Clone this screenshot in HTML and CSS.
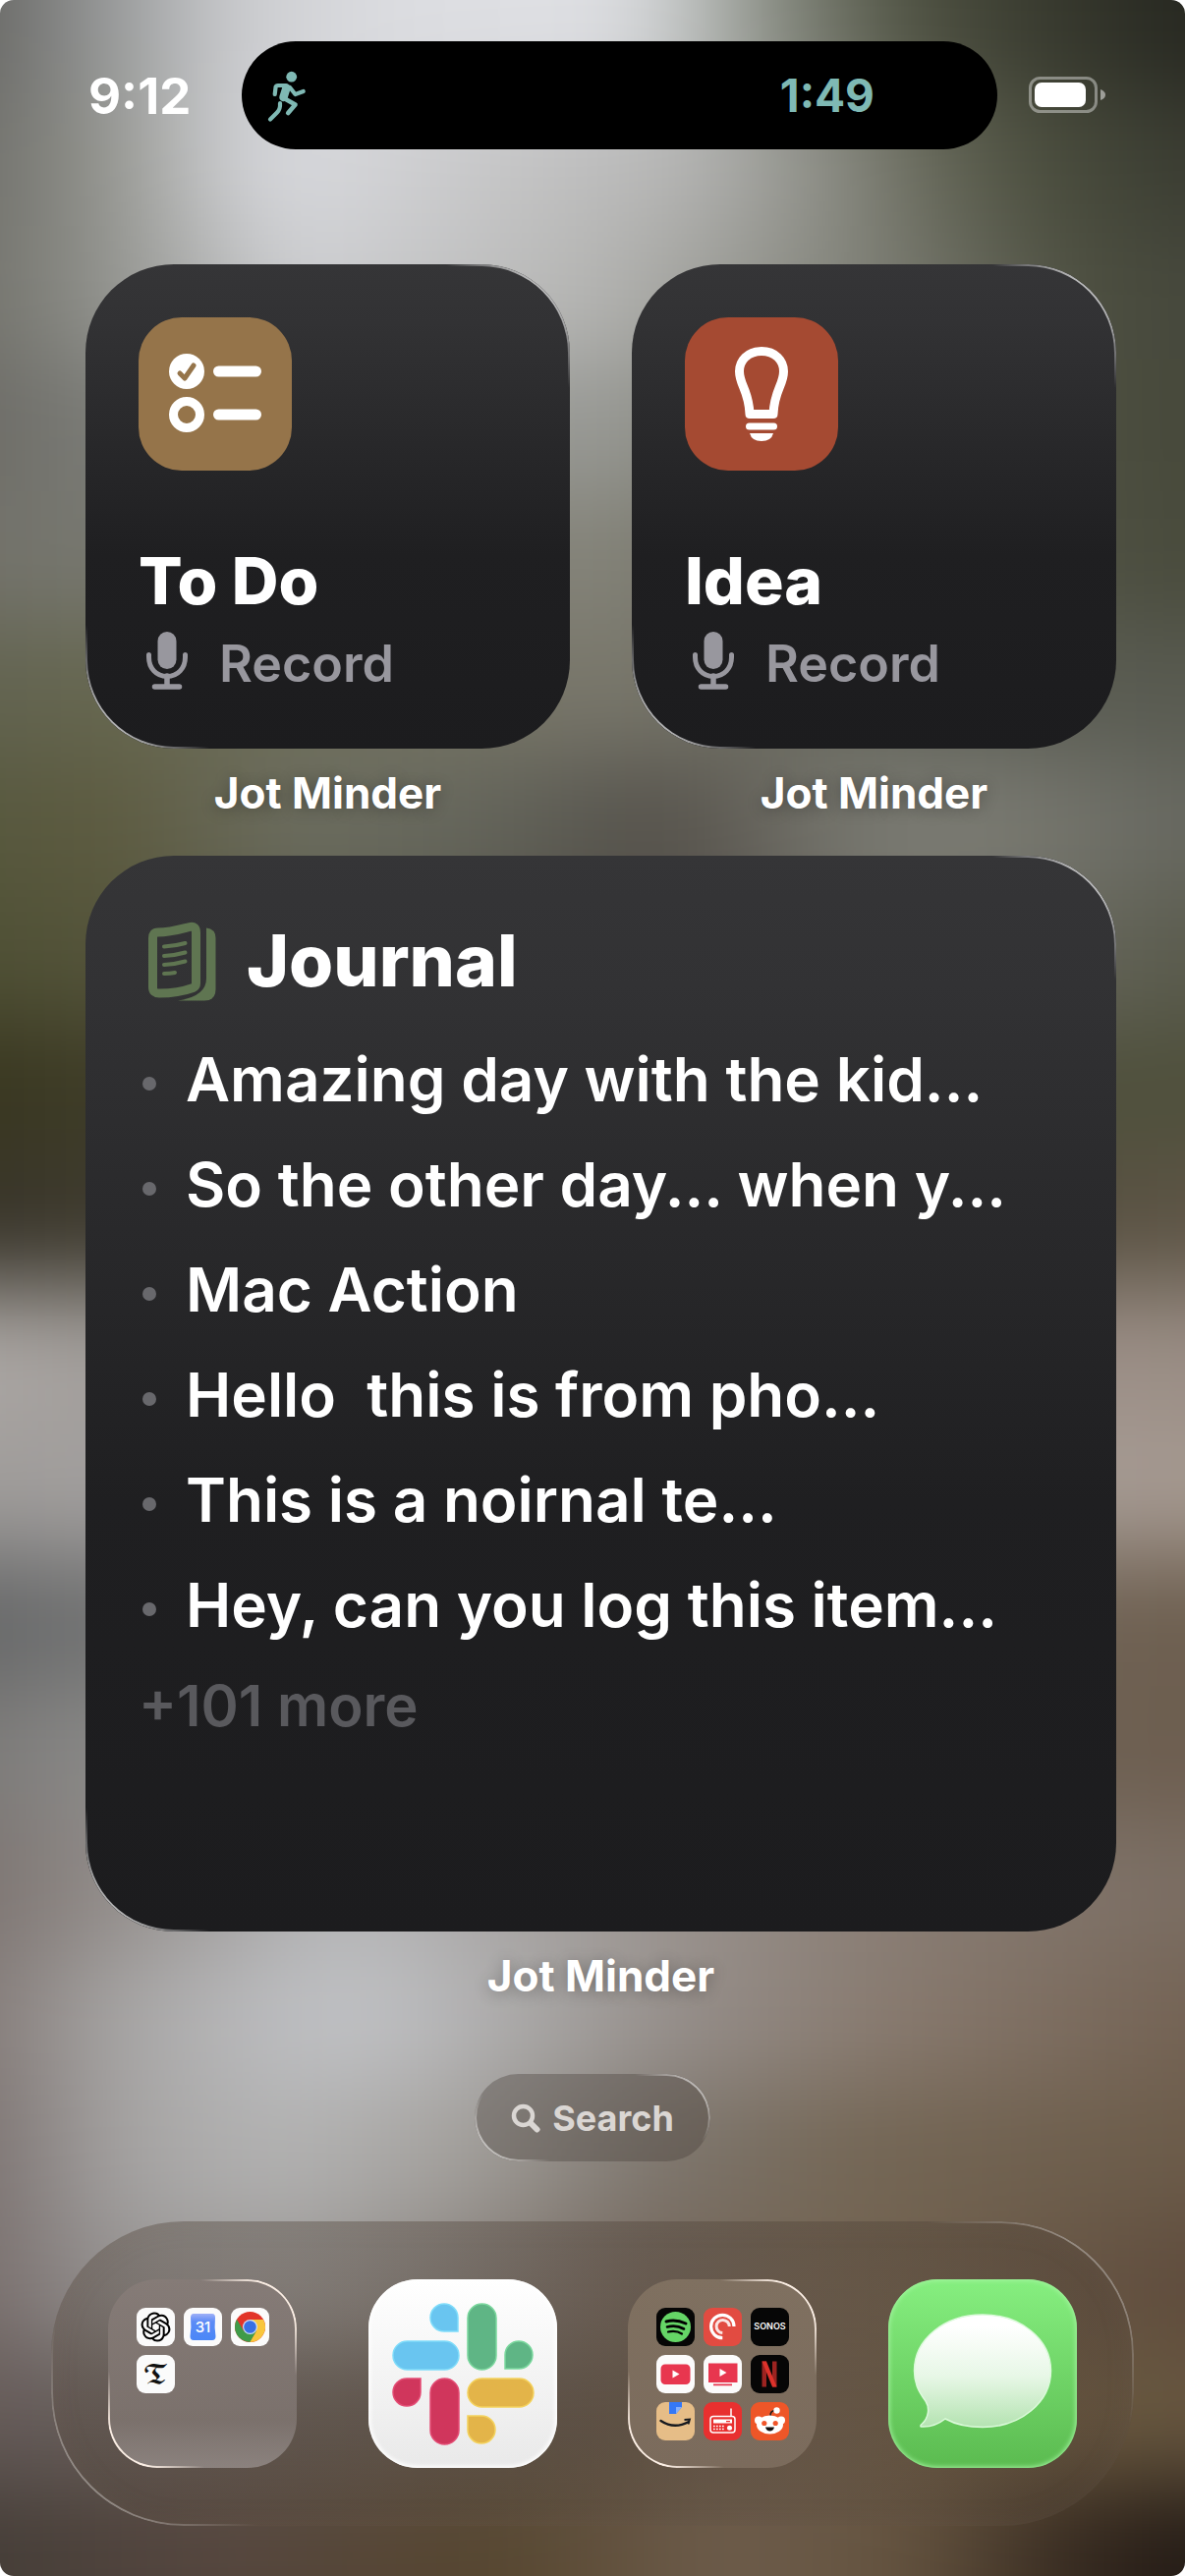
FILE: index.html
```html
<!DOCTYPE html>
<html lang="en">
<head>
    <meta charset="utf-8">
    <meta name="viewport" content="width=device-width, initial-scale=1">
    <title>Home Screen</title>
    <link rel="stylesheet" href="styles.css">
</head>
<body>

<div class="screen">

    <!-- blurred wallpaper, one strip of colour per row -->
    <div class="wallpaper" aria-hidden="true">
        <div class="strip s1"></div>
        <div class="strip s2"></div>
        <div class="strip s3"></div>
        <div class="strip s4"></div>
        <div class="strip s5"></div>
        <div class="strip s6"></div>
        <div class="strip s7"></div>
        <div class="strip s8"></div>
        <div class="strip s9"></div>
        <div class="strip s10"></div>
        <div class="strip s11"></div>
        <div class="strip s12"></div>
        <div class="strip s13"></div>
        <div class="strip s14"></div>
        <div class="strip s15"></div>
        <div class="strip s16"></div>
        <div class="strip s17"></div>
        <div class="strip s18"></div>
        <div class="strip s19"></div>
        <div class="strip s20"></div>
    </div>

    <header class="status">
        <time class="clock">9:12</time>
        <div class="island">
            <svg class="runner" viewBox="0 0 70 70" fill="none" stroke="#7fb9b4" stroke-linecap="round" stroke-linejoin="round">
                <circle cx="36.7" cy="16.2" r="5.4" fill="#7fb9b4" stroke="none"/>
                <path d="M19.7 34 L20.6 26.4 Q21 25 23 25 L31 25" stroke-width="4.2"/>
                <path d="M31.5 27.5 L28.5 37" stroke-width="8.5"/>
                <path d="M35 27 L40.5 34 L48.7 31" stroke-width="4.2"/>
                <path d="M29 38 L40.5 44.5 L33.2 53" stroke-width="4.6"/>
                <path d="M25 43 Q25.5 49 22 52.5 L15 59.5" stroke-width="4.2"/>
            </svg>
            <span class="timer">1:49</span>
        </div>
        <svg class="battery" viewBox="0 0 78 38">
            <rect x="1.5" y="1.5" width="67" height="34" rx="10" fill="none" stroke="#fff" stroke-opacity=".4" stroke-width="3"/>
            <rect x="6" y="6" width="52" height="25" rx="7" fill="#fff"/>
            <path d="M73 13 Q78 15 78 18.500 Q78 22 73 24Z" fill="#fff" fill-opacity=".5"/>
        </svg>
    </header>

    <main class="widgets">
        <section class="widget small">
            <div class="card rim">
                <svg class="tile tile-todo" viewBox="0 0 156 156">
                    <circle cx="49" cy="55" r="18" fill="#fff"/>
                    <path d="M42 57 L47 62 L56 49" fill="none" stroke="#95744a" stroke-width="5" stroke-linecap="round" stroke-linejoin="round"/>
                    <circle cx="49" cy="99" r="13.500" fill="none" stroke="#fff" stroke-width="9"/>
                    <path d="M81.500 55 H119.500 M81.500 99 H119.500" stroke="#fff" stroke-width="11" stroke-linecap="round"/>
                </svg>
                <h2>To Do</h2>
                <button class="record" type="button">
                    <svg class="mic" viewBox="-8 0 58 59"><use href="#mic"/></svg>
                    Record
                </button>
            </div>
            <p class="label">Jot Minder</p>
        </section>

        <section class="widget small">
            <div class="card rim">
                <svg class="tile tile-idea" viewBox="0 0 156 156">
                    <path d="M78 34.500 C64 34.500 55.500 44 55.500 55 C55.500 69 65 74 66 98.500 H90 C91 74 100.500 69 100.500 55 C100.500 44 92 34.500 78 34.500Z" fill="none" stroke="#fff" stroke-width="9" stroke-linejoin="round"/>
                    <rect x="62" y="107.500" width="32" height="7" rx="3.500" fill="#fff"/>
                    <path d="M66 118 H90 Q88 126 78 126 Q68 126 66 118Z" fill="#fff"/>
                </svg>
                <h2>Idea</h2>
                <button class="record" type="button">
                    <svg class="mic" viewBox="-8 0 58 59"><use href="#mic"/></svg>
                    Record
                </button>
            </div>
            <p class="label">Jot Minder</p>
        </section>

        <section class="widget large">
            <div class="card journal rim">
                <div class="journal-head">
                    <svg class="book" viewBox="0 0 90 90" fill="none" stroke="#5f7551" stroke-linecap="round" stroke-linejoin="round">
                        <path d="M19.500 19 C33 19 42 16 52 13.500 Q58.500 12 58.500 19 V71 Q58.500 74 55.500 75.500 C43 80 32 81 21 81 Q14.500 81 14.500 75 V25 Q14.500 19 19.500 19Z" stroke-width="9"/>
                        <path d="M26 33.500 Q37 33 47.500 30 M26 43 Q37 42.500 47.500 39.500 M26 52 Q37 51.500 47.500 48.500 M26 61 Q32 61 37 60" stroke-width="4"/>
                        <path d="M69 14.500 Q78.500 15.500 78.500 25 V77 Q78.500 88.500 67 88.500 H40 Q69 84 69 66Z" fill="#5f7551" stroke="none"/>
                    </svg>
                    <h2>Journal</h2>
                </div>
                <ul>
                    <li>Amazing day with the kid...</li>
                    <li>So the other day... when y...</li>
                    <li>Mac Action</li>
                    <li>Hello&nbsp; this is from pho...</li>
                    <li>This is a noirnal te...</li>
                    <li>Hey, can you log this item...</li>
                </ul>
                <p class="more">+101 more</p>
            </div>
            <p class="label">Jot Minder</p>
        </section>
    </main>

    <button class="search rim" type="button">
        <svg viewBox="0 0 30 30" fill="none" stroke="#dad6d3" stroke-linecap="round">
            <circle cx="12.500" cy="12.500" r="9.500" stroke-width="4.500"/>
            <path d="M20 20 L26.500 26.500" stroke-width="6"/>
        </svg>
        Search
    </button>

    <nav class="dock rim">
        <a href="#" class="app folder rim" aria-label="Folder">
            <svg class="mini white" viewBox="0 0 39 39">
                <path transform="translate(4.500 4.500) scale(1.250)" d="M22.2819 9.8211a5.9847 5.9847 0 0 0-.5157-4.9108 6.0462 6.0462 0 0 0-6.5098-2.9A6.0651 6.0651 0 0 0 4.9807 4.1818a5.9847 5.9847 0 0 0-3.9977 2.9 6.0462 6.0462 0 0 0 .7427 7.0966 5.98 5.98 0 0 0 .511 4.9107 6.051 6.051 0 0 0 6.5146 2.9001A5.9847 5.9847 0 0 0 13.2599 24a6.0557 6.0557 0 0 0 5.7718-4.2058 5.9894 5.9894 0 0 0 3.9977-2.9001 6.0557 6.0557 0 0 0-.7475-7.073zm-9.022 12.6081a4.4755 4.4755 0 0 1-2.8764-1.0408l.1419-.0804 4.7783-2.7582a.7948.7948 0 0 0 .3927-.6813v-6.7369l2.02 1.1686a.071.071 0 0 1 .038.052v5.5826a4.504 4.504 0 0 1-4.4945 4.4944zm-9.6607-4.1254a4.4708 4.4708 0 0 1-.5346-3.0137l.142.0852 4.783 2.7582a.7712.7712 0 0 0 .7806 0l5.8428-3.3685v2.3324a.0804.0804 0 0 1-.0332.0615L9.74 19.9502a4.4992 4.4992 0 0 1-6.1408-1.6464zM2.3408 7.8956a4.485 4.485 0 0 1 2.3655-1.9728V11.6a.7664.7664 0 0 0 .3879.6765l5.8144 3.3543-2.0201 1.1685a.0757.0757 0 0 1-.071 0l-4.8303-2.7865A4.504 4.504 0 0 1 2.3408 7.872zm16.5963 3.8558L13.1038 8.364 15.1192 7.2a.0757.0757 0 0 1 .071 0l4.8303 2.7913a4.4944 4.4944 0 0 1-.6765 8.1042v-5.6772a.79.79 0 0 0-.407-.667zm2.0107-3.0231l-.142-.0852-4.7735-2.7818a.7759.7759 0 0 0-.7854 0L9.409 9.2297V6.8974a.0662.0662 0 0 1 .0284-.0615l4.8303-2.7866a4.4992 4.4992 0 0 1 6.6802 4.66zM8.3065 12.863l-2.02-1.1638a.0804.0804 0 0 1-.038-.0567V6.0742a4.4992 4.4992 0 0 1 7.3757-3.4537l-.142.0805L8.704 5.459a.7948.7948 0 0 0-.3927.6813zm1.0976-2.3654l2.602-1.4998 2.6069 1.4998v2.9994l-2.5974 1.4997-2.6067-1.4997Z"/>
            </svg>
            <svg class="mini white" viewBox="0 0 39 39">
                <defs><linearGradient id="cal" x2="0" y2="1"><stop offset="0" stop-color="#9fb0f7"/><stop offset=".3" stop-color="#5c8bf6"/><stop offset="1" stop-color="#4a87f7"/></linearGradient></defs>
                <path d="M10 6 H29 Q32 6 32 10 Q31 20 32.500 29 Q32.500 33 29 33 H10 Q6.500 33 6.500 29 Q8 20 7 10 Q7 6 10 6Z" fill="url(#cal)"/>
                <text class="cal-day" x="19.500" y="25" text-anchor="middle">31</text>
            </svg>
            <svg class="mini white" viewBox="0 0 39 39">
                <circle cx="19.500" cy="19.500" r="15.500" fill="#e23529"/>
                <path d="M19.500 12 H33 A15.500 15.500 0 0 1 19 35 L26 23Z" fill="#f8c63c"/>
                <path d="M6 11.800 A15.500 15.500 0 0 0 19.300 35 L26 23.500 H13Z" fill="#3f9b49"/>
                <circle cx="19.500" cy="19.500" r="7.500" fill="#cfe0fb"/>
                <circle cx="19.500" cy="19.500" r="6.300" fill="#3870e4"/>
            </svg>
            <svg class="mini white" viewBox="0 0 39 39">
                <text class="times-t" x="19.500" y="29" text-anchor="middle">𝕿</text>
            </svg>
        </a>

        <a href="#" class="app slack" aria-label="Slack">
            <svg viewBox="0 0 192 192" stroke-width="1.500">
                <g fill="#69c5f0" stroke="#7fdcfa">
                    <path d="M91 53 H77 A14 14 0 1 1 91 39Z"/>
                    <rect x="25" y="63" width="67" height="29" rx="14.500"/>
                </g>
                <g fill="#5fb585" stroke="#7ad79d">
                    <rect x="101" y="25" width="29" height="67" rx="14.500"/>
                    <path d="M139 91 V77 A14 14 0 1 1 153 91Z"/>
                </g>
                <g fill="#d0365c" stroke="#e34c74">
                    <path d="M53 101 V115 A14 14 0 1 1 39 101Z"/>
                    <rect x="63" y="101" width="29" height="67" rx="14.500"/>
                </g>
                <g fill="#e3b449" stroke="#f4d25c">
                    <rect x="101" y="101" width="67" height="29" rx="14.500"/>
                    <path d="M101 139 H115 A14 14 0 1 1 101 153Z"/>
                </g>
            </svg>
        </a>

        <a href="#" class="app folder warm rim" aria-label="Folder">
            <svg class="mini black" viewBox="0 0 39 39">
                <circle cx="19.500" cy="19.500" r="15.500" fill="#65d566"/>
                <g fill="none" stroke="#000" stroke-linecap="round">
                    <path d="M10 14 Q20 11.500 30 16" stroke-width="3"/>
                    <path d="M11 19.500 Q20 17 28 21.500" stroke-width="2.600"/>
                    <path d="M12 24.500 Q20 22.500 26 26.500" stroke-width="2.200"/>
                </g>
            </svg>
            <svg class="mini coral" viewBox="0 0 39 39">
                <g fill="none" stroke="#fff">
                    <path d="M31 19 A11.700 11.700 0 1 0 19.300 30.700" stroke-width="3.200"/>
                    <path d="M26.300 19 A6.600 6.600 0 1 0 19.300 25.600" stroke-width="3" stroke-opacity=".85"/>
                </g>
            </svg>
            <svg class="mini black" viewBox="0 0 39 39">
                <text class="sonos" x="19.500" y="22" text-anchor="middle">SONOS</text>
            </svg>
            <svg class="mini white" viewBox="0 0 39 39">
                <rect x="4.500" y="9.500" width="30" height="20.500" rx="4.500" fill="#e8364f"/>
                <path d="M16.500 15.500 L23.500 19.500 L16.500 23.500Z" fill="#fff"/>
            </svg>
            <svg class="mini white" viewBox="0 0 39 39">
                <path d="M5 8.500 H34.500 V28 H5Z M10 29.500 H29 V31.200 H10Z" fill="#e8364f"/>
                <path d="M16.500 14 L23.500 18 L16.500 22Z" fill="#fff"/>
            </svg>
            <svg class="mini black" viewBox="0 0 39 39">
                <path d="M11.500 6.500 H16 V32.500 H11.500Z M22 6.500 H26.500 V32.500 H22Z" fill="#9c2320"/>
                <path d="M11.500 6.500 H16 L26.500 32.500 H22Z" fill="#dd322b"/>
            </svg>
            <svg class="mini sand" viewBox="0 0 39 39">
                <path d="M13 0 H26 V5 L20 12 H13Z" fill="#3478f6"/>
                <path d="M20 12 V5 H26Z" fill="#86b0fa"/>
                <path d="M4.500 19 Q18 28 33 20" fill="none" stroke="#16191f" stroke-width="2.400" stroke-linecap="round"/>
                <path d="M28.500 18 L34 17.500 L32.500 22.500" fill="none" stroke="#16191f" stroke-width="1.800"/>
            </svg>
            <svg class="mini red" viewBox="0 0 39 39">
                <g fill="none" stroke="#fff">
                    <rect x="7" y="14.500" width="25" height="16.500" rx="3" stroke-width="1.500"/>
                    <path d="M28 6.500 V14.500" stroke-width="1.500"/>
                    <path d="M10 24.500 H21 M10 27.500 H21" stroke-width="1.600" stroke-dasharray="1.700 1.300"/>
                </g>
                <path d="M10 17.500 H29 V21.500 H10Z" fill="#fff"/>
                <path d="M23 19 H27 V20.200 H23Z" fill="#e8302f"/>
                <circle cx="26.500" cy="26.300" r="2.500" fill="#fff"/>
            </svg>
            <svg class="mini orange" viewBox="0 0 39 39">
                <path d="M20 14 Q20 8.500 25 8.500" fill="none" stroke="#1b1b1b" stroke-width="1.500"/>
                <g fill="#fff">
                    <circle cx="26.500" cy="8.500" r="3.200"/>
                    <circle cx="8" cy="18.500" r="4"/>
                    <circle cx="31" cy="18.500" r="4"/>
                    <ellipse cx="19.500" cy="23" rx="13.500" ry="9.500"/>
                </g>
                <g fill="#f0562b"><circle cx="13.800" cy="21.500" r="2.600"/><circle cx="25.200" cy="21.500" r="2.600"/></g>
                <path d="M15 25.500 H24 Q23 29.500 19.500 29.500 Q16 29.500 15 25.500Z" fill="#111"/>
            </svg>
        </a>

        <a href="#" class="app messages" aria-label="Messages">
            <svg viewBox="0 0 192 192">
                <defs><linearGradient id="bubble" x2="0" y2="1"><stop offset=".1" stop-color="#fff"/><stop offset=".55" stop-color="#e7f7e6"/><stop offset="1" stop-color="#b4e3b1"/></linearGradient></defs>
                <path d="M96 36 C135 36 165.500 61 165.500 93 C165.500 125 135 150.500 96 150.500 C81 150.500 68 147.500 58 142 C51 147.500 43 150.500 34 150 C32 150 33 148 34.500 147 C41 141 42.500 131 38 124 C30 113 26.500 105 26.500 93 C26.500 61 57 36 96 36Z" fill="url(#bubble)" stroke="#dcfadb" stroke-width="1.500"/>
            </svg>
        </a>
    </nav>
</div>

<!-- shared symbols -->
<svg class="symbols" aria-hidden="true">
    <symbol id="mic" viewBox="0 0 42 59" width="42" height="59">
        <rect x="11.500" y="0" width="19" height="38" rx="9.500" fill="#98979e"/>
        <path d="M2.500 23.500 V26 C2.500 37 10 45.500 21 45.500 C32 45.500 39.500 37 39.500 26 V23.500" fill="none" stroke="#98979e" stroke-width="5" stroke-linecap="round"/>
        <path d="M21 45 V56 M8.500 56 H33.500" fill="none" stroke="#98979e" stroke-width="5.500" stroke-linecap="round"/>
    </symbol>
</svg>

</body>
</html>
```
FILE: styles.css
```css
* {
    box-sizing: border-box;
}

body, html {
    margin: 0;
    padding: 0;
    background: #fff;
    font-family: Inter, "Liberation Sans", sans-serif;
}

h2, p, ul {
    margin: 0;
    padding: 0;
}

button {
    border: 0;
    padding: 0;
    background: none;
    font-family: inherit;
}

.screen {
    position: relative;
    display: flex;
    flex-direction: column;
    min-height: 100vh;
    padding-bottom: 51px;
    border-radius: 14px;
    overflow: hidden;
    isolation: isolate;
    color: #fff;
}

.symbols {
    position: absolute;
    width: 0;
    height: 0;
}

/* wallpaper, larger than the screen so the blur has no pale edge */

.wallpaper {
    position: absolute;
    inset: -120px;
    z-index: -1;
    display: flex;
    flex-direction: column;
    filter: blur(46px);
}

.strip {
    flex: 1;
}

.s1, .s20 {
    flex: 0 0 215px;
}

.s1 { background: linear-gradient(90deg, #666663 7%, #a8aaab 19%, #cccdd0 25%, #dcdde1 36%, #dfe0e4 51%, #c5c8c8 56%, #868a80 63%, #505343 72%, #3c3e32 80%, #262720 92%); }
.s2 { background: linear-gradient(90deg, #70706b 7%, #94958f 16%, #d0d1d5 25%, #d8d9dd 30%, #c6c6c7 43%, #b4b4b3 57%, #8a8b83 67%, #656758 74%, #4c4f3f 81%, #383a30 93%); }
.s3 { background: linear-gradient(90deg, #73736c 7%, #92938e 16%, #cfd0d3 29%, #b5b5b3 50%, #83847b 68%, #4d4f40 84%, #45473c 93%); }
.s4 { background: linear-gradient(90deg, #6c6b66 7%, #7c7d78 16%, #9b9c98 50%, #6d6e60 68%, #4b4d3e 86%, #46483b 93%); }
.s5 { background: linear-gradient(90deg, #73726a 7%, #777870 16%, #85847a 50%, #55574a 77%, #484a3b 93%); }
.s6 { background: linear-gradient(90deg, #626350 7%, #66674f 16%, #7a786c 50%, #5d5f56 77%, #585a50 93%); }
.s7 { background: linear-gradient(90deg, #57583e 7%, #5d5b40 16%, #6c6d60 29%, #65665c 41%, #57554e 52%, #57534c 56%, #787870 68%, #7c7c74 77%, #66675f 93%); }
.s8 { background: linear-gradient(90deg, #4f5035 7%, #54543a 16%, #5a5b4a 32%, #4f4a45 55%, #73736a 73%, #595a4c 93%); }
.s9 { background: linear-gradient(90deg, #38361f 7%, #3f3d28 16%, #4f503f 77%, #4f503b 93%); }
.s10 { background: linear-gradient(90deg, #38342a 7%, #3f3b2f 16%, #544e3f 77%, #5e5546 93%); }
.s11 { background: linear-gradient(90deg, #aca7a4 7%, #a19d9a 16%, #9c9087 77%, #9a8d85 93%); }
.s12 { background: linear-gradient(90deg, #a09c9a 7%, #a19f9e 16%, #a89d98 77%, #a4988f 93%); }
.s13 { background: linear-gradient(90deg, #666768 7%, #727373 16%, #73665a 77%, #6d5f4f 93%); }
.s14 { background: linear-gradient(90deg, #7c7a78 7%, #8b8b8a 16%, #6e6052 77%, #6d5e50 93%); }
.s15 { background: linear-gradient(90deg, #7c7471 7%, #918b88 16%, #b6b7b9 32%, #8b8078 68%, #7a6d62 93%); }
.s16 { background: linear-gradient(90deg, #837a77 7%, #a5a3a2 16%, #bdbec1 28%, #c0c1c4 35%, #a8a6a5 46%, #958e8a 56%, #887a6f 71%, #736253 93%); }
.s17 { background: linear-gradient(90deg, #7b7270 7%, #a6a4a3 17%, #b3b3b3 28%, #a3a09c 41%, #7e776f 54%, #746756 68%, #6b5b49 93%); }
.s18 { background: linear-gradient(90deg, #786e6c 7%, #989594 17%, #a09d9b 29%, #8a847f 41%, #76695f 52%, #736350 70%, #5e4b3c 93%); }
.s19 { background: linear-gradient(90deg, #645a58 7%, #675e5a 17%, #645b54 32%, #5f5347 50%, #6c5c4c 64%, #6a583f 81%, #66563f 93%); }
.s20 { background: linear-gradient(90deg, #443d37 7%, #55463f 23%, #56462f 43%, #6d5c4b 59%, #64533f 72%, #35291f 84%, #221a15 93%); }

/* status bar */

.status {
    display: grid;
    grid-template-columns: 156px 1fr 110px;
    align-items: center;
    padding: 42px 81px 0 90px;
    margin-bottom: 117px;
}

.clock {
    font-size: 51px;
    font-weight: 700;
}

.island {
    display: flex;
    align-items: center;
    justify-content: space-between;
    height: 110px;
    padding: 0 125px 0 14px;
    border-radius: 55px;
    background: #000;
}

.runner {
    width: 70px;
    height: 70px;
}

.timer {
    color: #7fb9b4;
    font-size: 46px;
    font-weight: 700;
}

.battery {
    justify-self: end;
    width: 78px;
    height: 38px;
}

/* widgets */

.widgets {
    display: grid;
    grid-template-columns: 1fr 1fr;
    column-gap: 63px;
    row-gap: 19px;
    padding: 0 70px 0 87px;
}

.large {
    grid-column: 1 / -1;
}

.card {
    position: relative;
    display: flex;
    flex-direction: column;
    align-items: flex-start;
    aspect-ratio: 1;
    padding: 54px;
    border-radius: 90px;
    background: linear-gradient(#353537, #323234 12%, #1f1f21 60%, #1c1c1e);
}

.journal {
    aspect-ratio: 1049 / 1095;
}

/* light that catches the top right and bottom left corners */
.rim::after {
    content: "";
    position: absolute;
    inset: 0;
    padding: 2px;
    border-radius: inherit;
    background: linear-gradient(45deg, rgba(255, 255, 255, .65) 40px, transparent 90px, transparent calc(100% - 90px), rgba(255, 255, 255, .65) calc(100% - 40px));
    mask: linear-gradient(#000 0 0) content-box exclude, linear-gradient(#000 0 0);
    pointer-events: none;
}

.tile {
    width: 156px;
    height: 156px;
    border-radius: 44px;
}

.tile-todo {
    background: #95744a;
}

.tile-idea {
    background: #a54a32;
}

.card h2 {
    font-size: 66px;
    font-weight: 800;
    line-height: 80px;
}

.small h2 {
    margin: auto 0 12px;
}

.record {
    display: flex;
    align-items: center;
    gap: 24px;
    color: #98979e;
    font-size: 52px;
    font-weight: 600;
    line-height: 60px;
}

.mic {
    width: 58px;
    height: 59px;
    margin-bottom: 6px;
}

.label {
    font-size: 44px;
    font-weight: 700;
    line-height: 90px;
    text-align: center;
    text-shadow: 0 2px 16px rgba(0, 0, 0, .3);
}

.journal-head {
    display: flex;
    align-items: center;
    gap: 20px;
    margin-bottom: 15px;
}

.journal .journal-head h2 {
    font-size: 73px;
    line-height: 105px;
}

.book {
    width: 90px;
    height: 90px;
    margin-bottom: 6px;
}

.journal ul {
    list-style: none;
}

.journal li {
    display: flex;
    align-items: center;
    gap: 30px;
    font-size: 62px;
    font-weight: 600;
    line-height: 107px;
    white-space: nowrap;
}

.journal li::before {
    content: "";
    width: 14px;
    height: 14px;
    margin: 8px 0 0 4px;
    border-radius: 50%;
    background: #68686c;
}

.more {
    color: #59595d;
    font-size: 58px;
    font-weight: 600;
    line-height: 98px;
}

/* search */

.search {
    position: relative;
    align-self: center;
    display: flex;
    align-items: center;
    justify-content: center;
    gap: 12px;
    width: 240px;
    height: 89px;
    margin: 55px 0 61px;
    border-radius: 45px;
    background: rgba(70, 62, 56, .36);
    color: #dad6d3;
    font-size: 36px;
    font-weight: 700;
}

.search svg {
    width: 30px;
    height: 30px;
}

.search.rim::after {
    opacity: .8;
    background: linear-gradient(45deg, rgba(255, 255, 255, .65) 20px, transparent 55px, transparent calc(100% - 55px), rgba(255, 255, 255, .65) calc(100% - 20px));
}

/* dock */

.dock {
    position: relative;
    display: flex;
    justify-content: space-between;
    margin: auto 52px 0;
    padding: 59px 58px;
    border-radius: 135px;
    background: linear-gradient(rgba(70, 58, 48, .35), rgba(90, 76, 64, .25));
    box-shadow: inset 0 0 30px rgba(140, 120, 105, .12);
}

.dock.rim::after {
    opacity: .5;
    background: linear-gradient(45deg, rgba(255, 255, 255, .65) 60px, transparent 150px, transparent calc(100% - 150px), rgba(255, 255, 255, .65) calc(100% - 60px));
}

.app {
    position: relative;
    width: 192px;
    height: 192px;
    border-radius: 50px;
}

.app > svg {
    display: block;
}

.slack {
    background: linear-gradient(#fff, #e9e9e9);
    box-shadow: inset 0 0 4px 2px #fff;
}

.messages {
    background: linear-gradient(#86ef80, #5bbb50);
    box-shadow: inset 0 0 5px 1px #a5f5a2;
}

.folder {
    display: grid;
    grid-template-columns: repeat(3, 39px);
    grid-auto-rows: 39px;
    gap: 9px;
    padding: 29px;
    background: linear-gradient(#857b77, #7b716c 75%, #8b827e);
}

.folder.warm {
    background: linear-gradient(#7f7060, #7b6b5c);
}

.folder.rim::after {
    background: linear-gradient(45deg, #fbeee4 30px, transparent 70px, transparent calc(100% - 70px), #fbeee4 calc(100% - 30px));
}

.mini {
    width: 39px;
    height: 39px;
    border-radius: 9px;
}

.white { background: #fbfbfb; }
.black { background: #060606; }
.coral { background: #e24b41; }
.sand { background: #e6bd87; }
.red { background: #e8302f; }
.orange { background: #ee5628; }

.cal-day {
    fill: #fff;
    font-size: 15px;
    font-weight: 500;
}

.times-t {
    fill: #111;
    font-family: "DejaVu Sans", "DejaVu Math TeX Gyre", serif;
    font-size: 26px;
}

.sonos {
    fill: #fff;
    font-size: 9px;
    font-weight: 600;
}
```
